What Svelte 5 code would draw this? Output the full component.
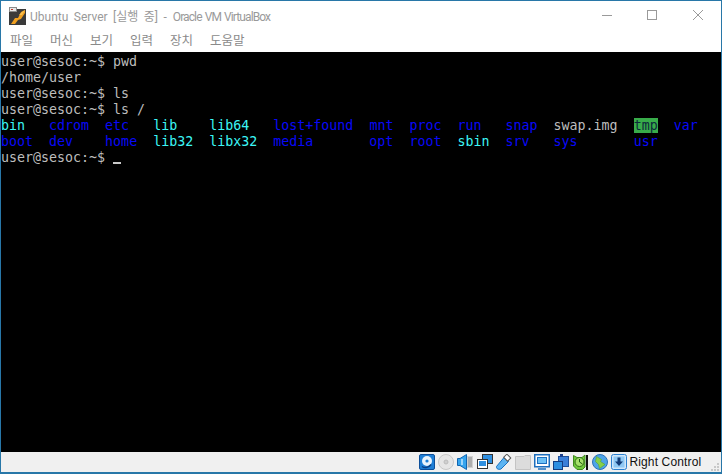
<script>
  const menus = ['파일', '머신', '보기', '입력', '장치', '도움말'];
</script>

<div class="window">
  <header class="titlebar">
    <svg class="logo" width="20" height="20" viewBox="0 0 20 20">
      <rect x="1" y="3" width="17" height="16" fill="#3a3a3a"/>
      <rect x="1" y="1" width="8" height="5" fill="#8a8a8a"/>
      <rect x="2" y="2" width="6" height="3" fill="#e8e8e8"/>
      <rect x="3" y="3" width="2" height="1" fill="#c03a2a"/>
      <path d="M3 18 L7 12 L10 12 L13 6 L17 4 L17 7 L13 13 L10 14 L7 18 Z" fill="#f0a020"/>
      <path d="M11 9 L14 6 L17 4 L14 9 Z" fill="#f8c050"/>
    </svg>
    <span class="title"><span class="t1">Ubuntu Server [실행 중] -</span> <span class="t2">Oracle VM VirtualBox</span></span>
    <div class="controls">
      <svg width="46" height="20" viewBox="0 0 46 20"><path d="M19 9.5H29" stroke="#9a9a9a" fill="none"/></svg>
      <svg width="46" height="20" viewBox="0 0 46 20"><rect x="18.5" y="4.500" width="9" height="9" stroke="#9a9a9a" fill="none"/></svg>
      <svg width="46" height="20" viewBox="0 0 46 20"><path d="M18 4L28 14M28 4L18 14" stroke="#9a9a9a" fill="none"/></svg>
    </div>
  </header>
  <nav class="menubar">
    {#each menus as m}<span class="menu">{m}</span>{/each}
  </nav>
  <main class="term"><pre>user@sesoc:~$ pwd
/home/user
user@sesoc:~$ ls
user@sesoc:~$ ls /
<span class="c">bin</span>   <span class="b">cdrom</span>  <span class="b">etc</span>   <span class="c">lib</span>    <span class="c">lib64</span>   <span class="b">lost+found</span>  <span class="b">mnt</span>  <span class="b">proc</span>  <span class="b">run</span>   <span class="b">snap</span>  swap.img  <span class="g">tmp</span>  <span class="b">var</span>
<span class="b">boot</span>  <span class="b">dev</span>    <span class="b">home</span>  <span class="c">lib32</span>  <span class="c">libx32</span>  <span class="b">media</span>       <span class="b">opt</span>  <span class="b">root</span>  <span class="c">sbin</span>  <span class="b">srv</span>   <span class="b">sys</span>       <span class="b">usr</span>
user@sesoc:~$ <span class="cursor"></span></pre></main>
  <footer class="status">
    <div class="icons">
      <svg width="16" height="16" viewBox="0 0 16 16"><rect x="0.5" y="0.5" width="15" height="15" rx="1.5" fill="#1f7fd6" stroke="#0d4f9a"/><circle cx="8" cy="7" r="5" fill="#eaf4fc"/><circle cx="8" cy="7" r="1.6" fill="#1f7fd6"/><path d="M3 12.500C6 14.500 10 13.500 12 10.500" stroke="#0b3f85" stroke-width="1.500" fill="none"/></svg>
      <svg width="16" height="16" viewBox="0 0 16 16"><circle cx="8" cy="8" r="7.500" fill="#e6e6e6" stroke="#c8c8c8"/><circle cx="8" cy="8" r="2" fill="#cfcfcf" stroke="#bdbdbd"/></svg>
      <svg width="16" height="16" viewBox="0 0 16 16"><rect x="10" y="2" width="6" height="12" fill="#d0d0d0"/><path d="M11 4H15M11 6H15M11 8H15M11 10H15M11 12H15" stroke="#8a8a8a"/><path d="M0.500 4.500H3L9.500 0.500V15.500L3 11.500H0.500Z" fill="#35a4ee" stroke="#1065b0"/><path d="M5 5V11" stroke="#bfe6ff" stroke-width="1.500"/></svg>
      <svg width="16" height="16" viewBox="0 0 16 16"><rect x="5.500" y="0.500" width="10" height="9" fill="#2f8fe0" stroke="#333"/><rect x="0.500" y="5.500" width="10" height="9" fill="#fff" stroke="#333"/><rect x="2" y="7" width="7" height="5" fill="#2f8fe0"/></svg>
      <svg width="16" height="16" viewBox="0 0 16 16"><path d="M0.500 12.500L8 3.500L12.500 7.500L5 15C3 16 0 15 0.500 12.500Z" fill="#5cb4f2" stroke="#1770c0"/><rect x="8.500" y="1.500" width="5.500" height="4.500" transform="rotate(45 11.300 3.700)" fill="#fff" stroke="#555"/></svg>
      <svg width="16" height="16" viewBox="0 0 16 16"><path d="M0.500 2.500H9L10 1.500H15.500V15.500H0.500Z" fill="#dcdcdc" stroke="#c4c4c4"/></svg>
      <svg width="16" height="16" viewBox="0 0 16 16"><rect x="0.750" y="0.750" width="14.500" height="12" fill="#fff" stroke="#1d6fbe" stroke-width="1.500"/><rect x="3.500" y="3.500" width="9" height="6" fill="#6cc0f5" stroke="#1d6fbe"/><path d="M4 15H12" stroke="#1d6fbe" stroke-width="1.500"/></svg>
      <svg width="16" height="16" viewBox="0 0 16 16"><rect x="5.500" y="2.500" width="10" height="10" fill="#3a7fd8" stroke="#1c4f9a"/><rect x="0.500" y="7.500" width="9" height="8" fill="#2f8fe0" stroke="#143d80"/><rect x="7" y="0" width="3" height="3" fill="#1c3f8a"/></svg>
      <svg width="16" height="16" viewBox="0 0 16 16"><path d="M0.500 1.500L4 3.500H9L12 1V13L9.500 15.500H4L0.500 12Z" fill="#6fc83a" stroke="#3f8a1e"/><circle cx="6.500" cy="8" r="4.500" fill="#a5e06a" stroke="#2f6f14"/><path d="M6.500 5V8L9.500 10" stroke="#1f5a10" fill="none"/><rect x="13" y="1" width="2" height="15" fill="#111"/></svg>
      <svg width="16" height="16" viewBox="0 0 16 16"><circle cx="8" cy="8" r="7.500" fill="#4ea4e8" stroke="#2a70b8"/><path d="M4.500 2.500L9.500 5.500L8.500 7.500L13 10.500L7.500 14.500L6.500 10.500L3.500 7.500Z" fill="#86d04a" stroke="#4c9a22" stroke-width="0.500"/></svg>
      <svg width="16" height="16" viewBox="0 0 16 16"><rect x="0.500" y="0.500" width="15" height="15" rx="2" fill="#cfe6fa" stroke="#2a80d0"/><rect x="2.500" y="2.500" width="11" height="11" fill="#8ec8f4"/><path d="M6.500 3.500H9.500V7.500H12L8 12L4 7.500H6.500Z" fill="#123c78"/></svg>
    </div>
    <span class="hostkey">Right Control</span>
    <svg class="grip" width="10" height="10" viewBox="0 0 10 10"><path d="M7 1h2v2h-2zM4 4h2v2h-2zM7 4h2v2h-2zM1 7h2v2h-2zM4 7h2v2h-2zM7 7h2v2h-2z" fill="#c8c8c8"/></svg>
  </footer>
</div>

<style>
  :global(body) { margin: 0; background: #fff; overflow: hidden; }
  .window {
    width: 722px; height: 474px; box-sizing: border-box;
    display: flex; flex-direction: column;
    border: 1px solid #2877a8; border-bottom-width: 2px; background: #fff;
    overflow: hidden;
  }
  .titlebar { height: 29px; display: flex; align-items: center; padding-left: 7px; flex: none; }
  .logo { flex: none; }
  .title {
    margin-left: 2px; font: 12px Roboto, "Noto Sans CJK KR", sans-serif; color: #9a9a9a;
    white-space: nowrap;
  }
  .t1 { word-spacing: 2.5px; }
  .t2 { letter-spacing: -0.9px; word-spacing: 1px; margin-left: 3px; }
  .controls { margin-left: auto; display: flex; }
  .menubar { height: 22px; display: flex; align-items: center; padding: 0 0 3px 9px; box-sizing: border-box; flex: none; }
  .menu { font: 12.5px "Noto Sans CJK KR", sans-serif; color: #8a8a8a; min-width: 40px; }
  .term { flex: 1; background: #000; overflow: hidden; padding-top: 2px; }
  pre {
    margin: 0; font: 13.3px/16px "DejaVu Sans Mono", monospace; color: #bdbdbd;
    white-space: pre;
  }
  .c { color: #3cf6f6; }
  .b { color: #0808f8; }
  .g { background: #38ac4a; color: #0c2a3a; }
  .cursor {
    display: inline-block; width: 8px; height: 2px; background: #c8c8c8; vertical-align: -2px;
  }
  .status {
    height: 20px; flex: none; display: flex; align-items: center; background: #f0f0f0; padding-left: 418px;
  }
  .icons { display: flex; align-items: center; gap: 3.2px; }
  .hostkey { margin-left: 2.500px; font: 12px "Liberation Sans", sans-serif; color: #111; letter-spacing: 0.15px; }
  .grip { margin-left: auto; margin-right: 1px; align-self: flex-end; }
</style>
